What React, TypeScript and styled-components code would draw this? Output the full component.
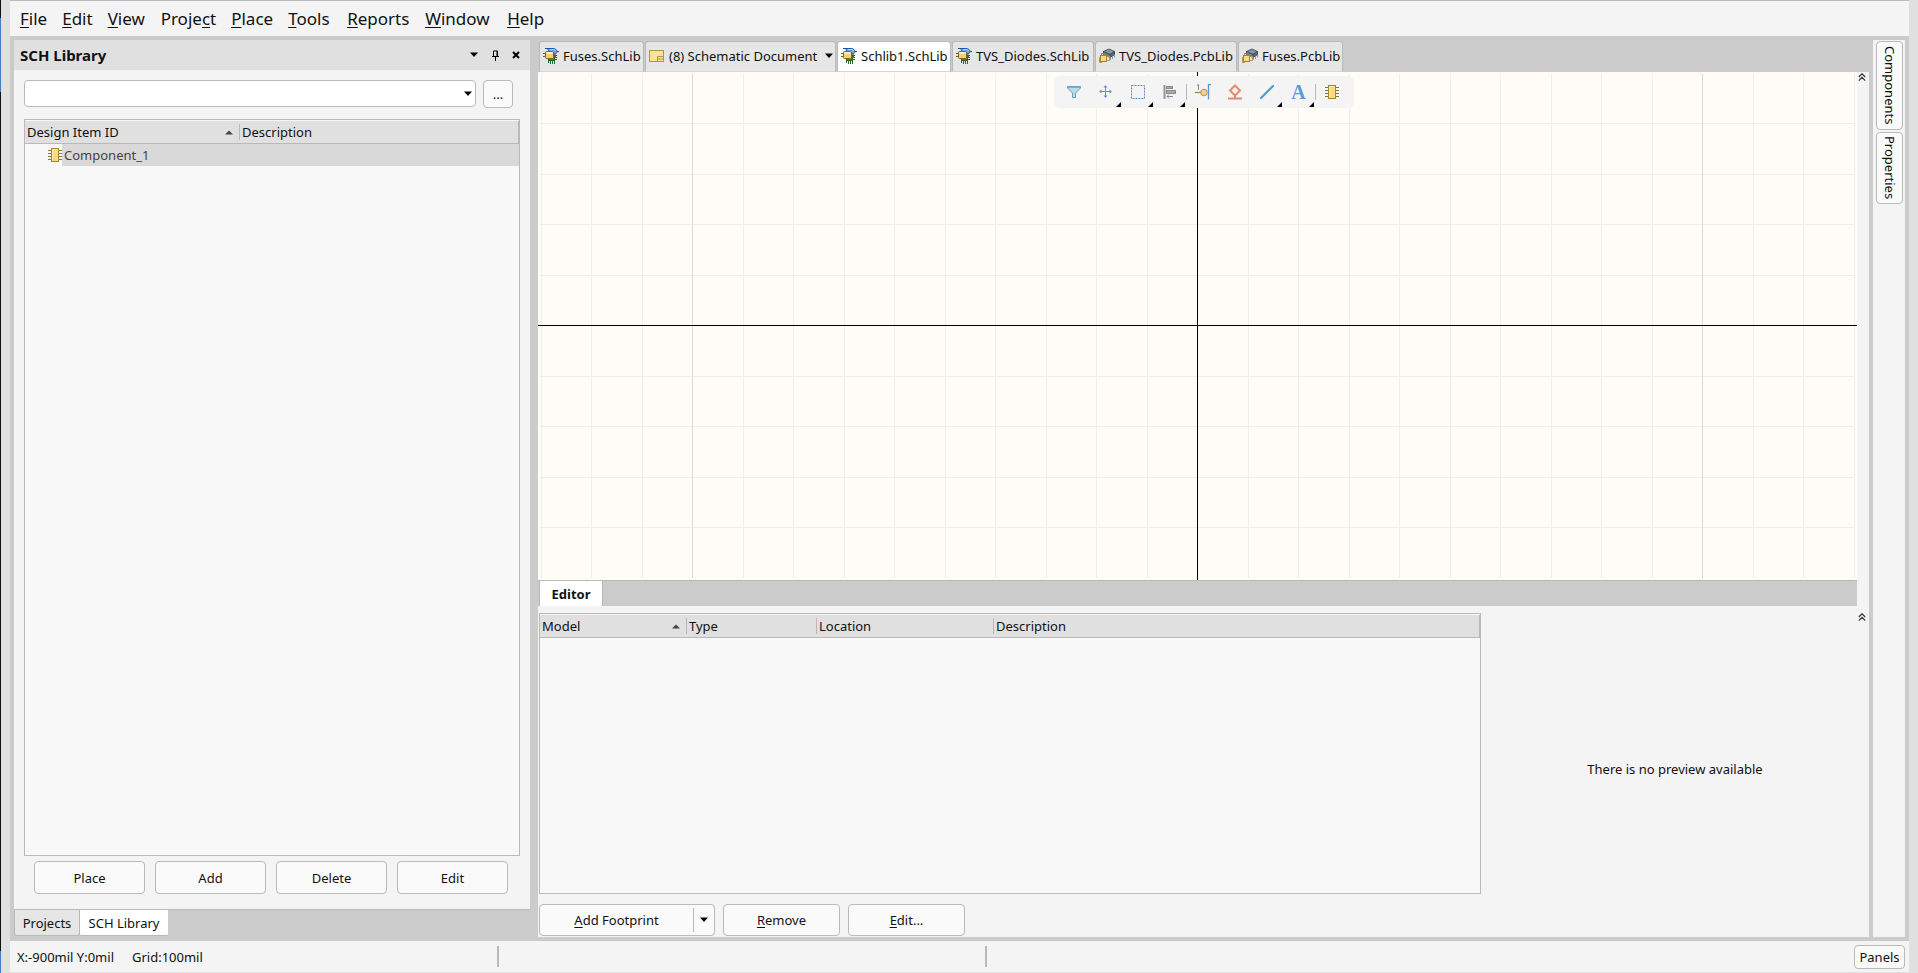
import React from "react";
import styled, { createGlobalStyle, css } from "styled-components";

const color = {
  frame: "#e0e0e0",
  gutter: "#cbcbcb",
  panel: "#f4f4f4",
  list: "#f8f8f8",
  line: "#b9b9b9",
  head: "#e0e0e0",
  button: "#fafafa",
  canvas: "#fffcf7",
};

const GlobalStyle = createGlobalStyle`
  * { box-sizing: border-box; }
  body {
    margin: 0;
    background: ${color.frame};
    color: #111;
    font-family: "Noto Sans", "Open Sans", sans-serif;
    font-size: 13px;
    line-height: 16px;
  }
  button, input { font: inherit; color: inherit; }
  button { cursor: default; padding: 0; }
`;

const Desktop = styled.div`
  display: flex;
  min-height: 100vh;
`;

const DesktopEdge = styled.div`
  width: 1px;
  background: linear-gradient(#111 18px, #3f7fbf 18px, #3f7fbf 92px, #111 92px, #111 calc(100% - 22px), #3f7fbf calc(100% - 22px));
`;

const Window = styled.div`
  flex: 1;
  min-width: 0;
  display: flex;
  flex-direction: column;
  margin: 0 9px;
  padding-bottom: 1px;
  border-top: 1px solid ${color.line};
`;

const MenuBar = styled.nav`
  height: 35px;
  display: flex;
  align-items: center;
  padding: 0 10px;
  gap: 15px;
  background: ${color.panel};
`;

const MenuItem = styled.button<{ $width: number }>`
  min-width: ${(p) => p.$width}px;
  border: 0;
  background: none;
  text-align: left;
  white-space: nowrap;
  font-size: 17px;
  line-height: 24px;
`;

const Key = styled.span`
  text-decoration: underline;
  text-underline-offset: 2px;
`;

const Workspace = styled.div`
  flex: 1;
  display: flex;
  min-height: 0;
  padding: 4px;
  background: ${color.gutter};
`;

const LibraryPanel = styled.aside`
  width: 516px;
  flex: none;
  display: flex;
  flex-direction: column;
  margin-right: 8px;
`;

const PanelTitle = styled.header`
  height: 30px;
  display: flex;
  align-items: center;
  padding: 0 7px 0 6px;
  gap: 7px;
  background: ${color.head};
`;

const PanelHeading = styled.h1`
  flex: 1;
  margin: 0;
  font-size: 15px;
  line-height: 20px;
  font-weight: 700;
`;

const IconButton = styled.button`
  display: flex;
  align-items: center;
  justify-content: center;
  width: 14px;
  height: 16px;
  border: 0;
  background: none;
`;

const PanelBody = styled.div`
  flex: 1;
  display: flex;
  flex-direction: column;
  padding: 10px 10px 15px;
  background: ${color.panel};
  border-bottom: 1px solid ${color.line};
`;

const FilterRow = styled.div`
  display: flex;
  align-items: flex-start;
  gap: 7px;
  padding-right: 7px;
  margin-bottom: 11px;
`;

const Combo = styled.div`
  flex: 1;
  height: 27px;
  display: flex;
  align-items: center;
  border: 1px solid ${color.line};
  border-radius: 4px;
  background: #fff;
`;

const ComboInput = styled.input`
  flex: 1;
  min-width: 0;
  height: 100%;
  padding: 0 6px;
  border: 0;
  background: none;
  outline: none;
`;

const outlined = css`
  border: 1px solid ${color.line};
  border-radius: 4px;
  background: ${color.button};
`;

const PushButton = styled.button<{ $width?: number; $height?: number }>`
  ${outlined}
  ${(p) => (p.$width ? `width: ${p.$width}px;` : "flex: 1;")}
  height: ${(p) => p.$height ?? 33}px;
`;

const ListBox = styled.div`
  flex: 1;
  padding-top: 1px;
  border: 1px solid ${color.line};
  background: ${color.list};
`;

const Table = styled.table`
  width: 100%;
  table-layout: fixed;
  border-collapse: separate;
  border-spacing: 0;
`;

const HeadCell = styled.th`
  height: 23px;
  padding: 0;
  font-weight: 400;
  text-align: left;
  background: ${color.head};
  border-bottom: 1px solid ${color.line};
  &:last-child { border-right: 1px solid ${color.line}; }
`;

const HeadLabel = styled.div<{ $first?: boolean }>`
  display: flex;
  align-items: center;
  justify-content: space-between;
  height: 16px;
  padding: 0 6px 0 2px;
  border-left: ${(p) => (p.$first ? "0" : `1px solid ${color.line}`)};
`;

const ItemCell = styled.td`
  height: 22px;
  padding: 0;
  color: #444;
  &:last-child { background: #d9d9d9; }
`;

const ItemLabel = styled.div`
  display: flex;
  align-items: center;
  height: 22px;
  padding-left: 23px;
`;

const ItemName = styled.span`
  flex: 1;
  height: 22px;
  padding-left: 2px;
  line-height: 22px;
  background: #d9d9d9;
`;

const LibraryActions = styled.div`
  display: flex;
  gap: 10px;
  padding: 5px 12px 0 10px;
`;

const PanelTabs = styled.div`
  display: flex;
  height: 27px;
`;

const PanelTab = styled.button<{ $active?: boolean; $width: number }>`
  width: ${(p) => p.$width}px;
  height: 26px;
  border: 1px solid ${(p) => (p.$active ? "#fff" : color.line)};
  border-top: 0;
  border-bottom-color: ${color.line};
  border-radius: 0 0 3px 3px;
  background: ${(p) => (p.$active ? "#fff" : "#e6e6e6")};
`;

const DocumentArea = styled.main`
  flex: 1;
  min-width: 0;
  display: flex;
  flex-direction: column;
`;

const DocumentTabs = styled.div`
  height: 32px;
  display: flex;
  padding: 1px 1px 0;
  gap: 1px;
`;

const DocumentTab = styled.button<{ $active?: boolean; $width: number }>`
  width: ${(p) => p.$width}px;
  height: 31px;
  display: flex;
  align-items: center;
  gap: 4px;
  padding: 0 1px 2px 3px;
  white-space: nowrap;
  border: 1px solid ${color.line};
  border-bottom-color: #d6d6d6;
  border-radius: 3px 3px 0 0;
  background: ${(p) => (p.$active ? "#fff" : "#e6e6e6")};
`;

const TabCaption = styled.span`
  flex: 1;
  text-align: left;
`;

const Pane = styled.section<{ $grow: number }>`
  flex: ${(p) => p.$grow} 1 0;
  min-height: 0;
  display: flex;
  background: ${color.panel};
`;

const CollapseStrip = styled.div<{ $top: number }>`
  width: 12px;
  padding: ${(p) => p.$top}px 0 0 1px;
  background: ${color.panel};
`;

const CollapseButton = styled.button`
  display: block;
  width: 8px;
  height: 8px;
  border: 0;
  background: none;
  line-height: 0;
`;

const CanvasFrame = styled.div`
  position: relative;
  flex: 1;
  min-width: 0;
  background: ${color.canvas};
`;

const CanvasDrawing = styled.svg`
  position: absolute;
  inset: 0;
  width: 100%;
  height: 100%;
  display: block;
`;

const ActiveBar = styled.div`
  position: absolute;
  top: 4px;
  left: 50%;
  margin-left: -144px;
  width: 300px;
  height: 32px;
  display: flex;
  align-items: center;
  padding-left: 4px;
  border-radius: 6px;
  background: #f4f4f4;
`;

const Tool = styled.button<{ $divided?: boolean }>`
  position: relative;
  width: ${(p) => (p.$divided ? 33 : 32)}px;
  height: 32px;
  display: flex;
  align-items: center;
  justify-content: center;
  padding-left: ${(p) => (p.$divided ? 2 : 0)}px;
  border: 0;
  background: none;
  &::before {
    content: "";
    display: ${(p) => (p.$divided ? "block" : "none")};
    position: absolute;
    left: 0;
    top: 8px;
    width: 1px;
    height: 16px;
    background: ${color.line};
  }
`;

const MoreCorner = styled.span`
  position: absolute;
  right: 1px;
  bottom: 1px;
  border-left: 5px solid transparent;
  border-bottom: 5px solid #000;
`;

const EditorBar = styled.div`
  height: 26px;
  display: flex;
  margin-right: 12px;
  padding-left: 1px;
  border-top: 1px solid ${color.line};
`;

const EditorStrip = styled.div`
  background: linear-gradient(to left, ${color.panel} 12px, ${color.gutter} 12px);
`;

const EditorTab = styled.button`
  width: 64px;
  border: 1px solid ${color.line};
  border-width: 0 1px;
  background: #fff;
  font-weight: 700;
`;

const ModelPane = styled.div`
  flex: 942 1 0;
  display: flex;
  flex-direction: column;
  padding: 7px 0 1px 1px;
`;

const ModelActions = styled.div`
  display: flex;
  gap: 8px;
  padding-top: 10px;
`;

const SplitButton = styled.div`
  ${outlined}
  display: flex;
  align-items: center;
  width: 176px;
  height: 32px;
`;

const SplitMain = styled.button`
  flex: 1;
  height: 24px;
  border: 0;
  background: none;
`;

const SplitArrow = styled.button`
  width: 21px;
  height: 24px;
  display: flex;
  align-items: center;
  justify-content: center;
  border: 0;
  border-left: 1px solid ${color.line};
  background: none;
`;

const Preview = styled.div`
  flex: 364 1 0;
  display: flex;
  align-items: center;
  justify-content: center;
  padding: 0 0 6px 12px;
`;

const SideBar = styled.aside`
  width: 32px;
  flex: none;
  margin-left: 4px;
  padding: 1px 2px 0 3px;
  display: flex;
  flex-direction: column;
  gap: 2px;
  background: ${color.panel};
`;

const SideTab = styled.button<{ $height: number }>`
  ${outlined}
  height: ${(p) => p.$height}px;
  writing-mode: vertical-rl;
`;

const StatusBar = styled.footer`
  height: 31px;
  display: flex;
  align-items: center;
  padding: 0 4px 0 7px;
  background: ${color.panel};
`;

const StatusCell = styled.div<{ $width?: number }>`
  ${(p) => (p.$width ? `width: ${p.$width}px;` : "flex: 1;")}
  height: 21px;
  display: flex;
  align-items: center;
  gap: 18px;
  ${(p) => (p.$width ? `border-right: 2px solid ${color.line};` : "")}
`;

/* ---------- drawings ---------- */

const DownArrow = () => (
  <svg width="10" height="6" viewBox="0 0 10 6" aria-hidden>
    <path d="M1 0.5H9L5 5Z" fill="#000" />
  </svg>
);

const SortMark = () => (
  <svg width="8" height="5" viewBox="0 0 8 5" aria-hidden>
    <path d="M0 4.5H8L4 0.5Z" fill="#444" />
  </svg>
);

const PinIcon = () => (
  <svg width="9" height="11" viewBox="0 0 9 11" aria-hidden>
    <path d="M2.5 6V1H6.5V6M1 6.5H8M4.5 7V11" fill="none" stroke="#000" />
    <path d="M5.5 1H7V6.5H5.5Z" fill="#000" />
  </svg>
);

const CloseIcon = () => (
  <svg width="8" height="8" viewBox="0 0 8 8" aria-hidden>
    <path d="M1 1L7 7M7 1L1 7" stroke="#000" strokeWidth="2" />
  </svg>
);

const CollapseIcon = () => (
  <svg width="8" height="8" viewBox="0 0 8 8" aria-hidden>
    <path d="M0.8 4L4 0.8L7.2 4M0.8 7.6L4 4.4L7.2 7.6" fill="none" stroke="#333" strokeWidth="1.2" />
  </svg>
);

const ChipIcon = () => (
  <svg width="14" height="14" viewBox="0 0 14 14" aria-hidden>
    <path d="M0 2.5H14M0 5.5H14M0 8.5H14M0 11.5H14" stroke="#8d7433" />
    <rect x="3.5" y="0.5" width="7" height="13" fill="#ffd97e" stroke="#a8842c" />
    <path d="M4.5 12.5V1.5H9" fill="none" stroke="#ffeab0" />
  </svg>
);

const SchLibIcon = () => (
  <svg width="16" height="16" viewBox="0 0 16 16" aria-hidden>
    <path d="M2 0.5H7M13 3.5H16" stroke="#1b4c9b" />
    <path d="M4.5 0.5H10C12.500 0.500 14 2 14 3.500S12.500 6.500 10.500 6.500H5.500C6.500 4.500 6 2.500 4.500 0.500Z" fill="#6ba6f2" stroke="#1f57ab" />
    <path d="M7 1.500H10.500C12 1.500 12.500 2.500 12.500 3" fill="none" stroke="#b4d4fb" />
    <path d="M5.500 12V15M7.500 12V16M9.500 12V16M11.500 12V16M12 7.500H14M12 9.500H14M12 11.500H14" stroke="#256b25" />
    <rect x="5.500" y="7.500" width="6" height="5" fill="#2f8b33" stroke="#226a26" />
    <path d="M0 5.500H13M0 8.500H13" stroke="#7e6118" />
    <rect x="2.500" y="3.500" width="8" height="7" rx="1" fill="#f3d079" stroke="#86661a" />
    <path d="M3.500 5H9.500" stroke="#fff0bb" strokeWidth="2" />
  </svg>
);

const SheetIcon = () => (
  <svg width="16" height="12" viewBox="0 0 16 12" aria-hidden>
    <rect x="0.500" y="0.500" width="14" height="11" fill="#f9e394" stroke="#ad9350" />
    <path d="M8.500 11V6.500H14M8.500 9H14" fill="none" stroke="#ad9350" />
  </svg>
);

const PcbLibIcon = () => (
  <svg width="16" height="16" viewBox="0 0 16 16" aria-hidden>
    <path d="M4.500 3.500L10 1L15.500 3.500L11 6.500Z" fill="#8496a9" stroke="#4b5968" />
    <path d="M11 6.500L15.500 3.500V6.500L11 9.500Z" fill="#5a6a7b" stroke="#3f4c5a" />
    <path d="M4.500 3.500L11 6.500V9.500L4.500 6.500Z" fill="#6f8193" stroke="#44515f" />
    <path d="M11.500 9.500V12M13.500 8.500V11M15.500 7V9.500" stroke="#8b97a3" />
    <path d="M2.500 8V5.500H5.500V8" fill="none" stroke="#a38433" />
    <rect x="1.500" y="7.500" width="6" height="6" fill="#f8db83" stroke="#a38433" />
    <path d="M8 8.500H10.500V12.500H8M0.500 9V14.500H3" fill="none" stroke="#b89a4c" />
  </svg>
);

const FilterIcon = () => (
  <svg width="14" height="14" viewBox="0 0 14 14" aria-hidden>
    <path d="M0.500 1.500H13.500V3L8.500 8V12.500H5.500V8L0.500 3Z" fill="#b7dbe8" stroke="#6aa3bb" />
    <path d="M1 2.500H13" stroke="#7fb2c8" />
  </svg>
);

const MoveIcon = () => (
  <svg width="14" height="14" viewBox="0 0 14 14" aria-hidden>
    <path d="M6.500 1V12M1 6.500H12" stroke="#6f8fd0" />
    <path d="M6.500 0L8.500 2.500H4.500ZM6.500 13L4.500 10.500H8.500ZM0 6.500L2.500 4.500V8.500ZM13 6.500L10.500 8.500V4.500Z" fill="#6f8fd0" />
  </svg>
);

const SelectIcon = () => (
  <svg width="14" height="14" viewBox="0 0 14 14" aria-hidden>
    <rect x="0.500" y="0.500" width="13" height="13" fill="none" stroke="#5f86cc" strokeDasharray="2 1" />
  </svg>
);

const AlignIcon = () => (
  <svg width="14" height="14" viewBox="0 0 14 14" aria-hidden>
    <path d="M1.500 0V14" stroke="#959595" strokeWidth="2" />
    <rect x="3.500" y="1.500" width="6" height="2" fill="#aaa" stroke="#8a8a8a" />
    <rect x="3.500" y="5.500" width="9" height="3" fill="#aaa" stroke="#8a8a8a" />
    <path d="M4 11.500H10M6 9.500L4 11.500L6 13.500" fill="none" stroke="#8a8a8a" />
  </svg>
);

const PinToolIcon = () => (
  <svg width="16" height="16" viewBox="0 0 16 16" aria-hidden>
    <path d="M0 8.500H6" stroke="#a98448" strokeWidth="1.300" />
    <path d="M2 1.500L3.500 0.500V6" fill="none" stroke="#8a8a8a" />
    <circle cx="9" cy="8.500" r="3.300" fill="#f2cf92" stroke="#b38d4c" />
    <path d="M16 0.500H13.500V15.500" fill="none" stroke="#5b9ad8" strokeWidth="1.300" />
  </svg>
);

const DirectiveIcon = () => (
  <svg width="14" height="16" viewBox="0 0 14 16" aria-hidden>
    <path d="M7 1.500L12 6.500L7 11.500L2 6.500Z" fill="none" stroke="#e58a6c" strokeWidth="2" />
    <path d="M0 14.500H14M7 11V14" stroke="#e58a6c" strokeWidth="2" />
  </svg>
);

const LineIcon = () => (
  <svg width="14" height="14" viewBox="0 0 14 14" aria-hidden>
    <path d="M1 13L13 1" stroke="#5797d8" strokeWidth="2.200" strokeLinecap="round" />
  </svg>
);

const LetterA = styled.span`
  font-family: "Liberation Serif", serif;
  font-size: 20px;
  line-height: 20px;
  font-weight: 700;
  color: #5a9adb;
`;

/* Grid pitch is 50.5 px per 100 mil; every tenth line is emphasised. */
const steps = Array.from({ length: 81 }, (_, i) => i - 40)
  .filter((n) => n !== 0)
  .sort((a, b) => Number(a % 10 === 0) - Number(b % 10 === 0));

const SchematicGrid = () => (
  <CanvasDrawing aria-hidden>
    <svg x="50%" y="50%" overflow="visible">
      {steps.map((n) => {
        const at = Math.round(n * 50.5);
        return (
          <g key={n} stroke={n % 10 === 0 ? "#d9d9d6" : "#eeeeeb"}>
            <path d={`M${at} -2000V2000`} />
            <path d={`M-3000 ${at - 0.5}H3000`} />
          </g>
        );
      })}
    </svg>
    <rect width="100%" height="100%" fill="none" stroke={color.canvas} strokeWidth="4" />
    <svg x="50%" y="50%" overflow="visible">
      <path d="M0 -2000V2000M-3000 -0.500H3000" stroke="#000" />
    </svg>
  </CanvasDrawing>
);

const menus: { before?: string; hot: string; after: string; width: number }[] = [
  { hot: "F", after: "ile", width: 27 },
  { hot: "E", after: "dit", width: 30 },
  { hot: "V", after: "iew", width: 38 },
  { before: "Proje", hot: "c", after: "t", width: 54 },
  { hot: "P", after: "lace", width: 40 },
  { hot: "T", after: "ools", width: 44 },
  { hot: "R", after: "eports", width: 63 },
  { hot: "W", after: "indow", width: 67 },
  { hot: "H", after: "elp", width: 36 },
];

const documents = [
  { name: "Fuses.SchLib", icon: <SchLibIcon />, width: 105 },
  { name: "(8) Schematic Document", icon: <SheetIcon />, width: 191, menu: true },
  { name: "Schlib1.SchLib", icon: <SchLibIcon />, width: 114, active: true },
  { name: "TVS_Diodes.SchLib", icon: <SchLibIcon />, width: 142 },
  { name: "TVS_Diodes.PcbLib", icon: <PcbLibIcon />, width: 142 },
  { name: "Fuses.PcbLib", icon: <PcbLibIcon />, width: 105 },
];

const tools = [
  { name: "Filter", icon: <FilterIcon /> },
  { name: "Move", icon: <MoveIcon />, more: true },
  { name: "Select", icon: <SelectIcon />, more: true },
  { name: "Align", icon: <AlignIcon />, more: true },
  { name: "Place pin", icon: <PinToolIcon />, divided: true },
  { name: "Place directive", icon: <DirectiveIcon /> },
  { name: "Place line", icon: <LineIcon />, more: true },
  { name: "Place text", icon: <LetterA>A</LetterA>, more: true },
  { name: "Place part", icon: <ChipIcon />, divided: true },
];

export default function App() {
  return (
    <>
      <GlobalStyle />
      <Desktop>
        <DesktopEdge />
        <Window>
          <MenuBar>
            {menus.map((m) => (
              <MenuItem key={m.hot + m.after} $width={m.width}>
                {m.before}
                <Key>{m.hot}</Key>
                {m.after}
              </MenuItem>
            ))}
          </MenuBar>

          <Workspace>
            <LibraryPanel>
              <PanelTitle>
                <PanelHeading>SCH Library</PanelHeading>
                <IconButton aria-label="Panel menu"><DownArrow /></IconButton>
                <IconButton aria-label="Pin panel"><PinIcon /></IconButton>
                <IconButton aria-label="Close panel"><CloseIcon /></IconButton>
              </PanelTitle>
              <PanelBody>
                <FilterRow>
                  <Combo>
                    <ComboInput type="text" aria-label="Filter components" />
                    <IconButton aria-label="Show filters"><DownArrow /></IconButton>
                  </Combo>
                  <PushButton $width={30} $height={28}>...</PushButton>
                </FilterRow>
                <ListBox>
                  <Table>
                    <colgroup>
                      <col width="214" />
                      <col />
                    </colgroup>
                    <thead>
                      <tr>
                        <HeadCell><HeadLabel $first>Design Item ID<SortMark /></HeadLabel></HeadCell>
                        <HeadCell><HeadLabel>Description</HeadLabel></HeadCell>
                      </tr>
                    </thead>
                    <tbody>
                      <tr>
                        <ItemCell>
                          <ItemLabel>
                            <ChipIcon />
                            <ItemName>Component_1</ItemName>
                          </ItemLabel>
                        </ItemCell>
                        <ItemCell />
                      </tr>
                    </tbody>
                  </Table>
                </ListBox>
                <LibraryActions>
                  <PushButton>Place</PushButton>
                  <PushButton>Add</PushButton>
                  <PushButton>Delete</PushButton>
                  <PushButton>Edit</PushButton>
                </LibraryActions>
              </PanelBody>
              <PanelTabs>
                <PanelTab $width={66}>Projects</PanelTab>
                <PanelTab $width={88} $active>SCH Library</PanelTab>
              </PanelTabs>
            </LibraryPanel>

            <DocumentArea>
              <DocumentTabs>
                {documents.map((d) => (
                  <DocumentTab key={d.name} $width={d.width} $active={d.active}>
                    {d.icon}
                    <TabCaption>{d.name}</TabCaption>
                    {d.menu && <DownArrow />}
                  </DocumentTab>
                ))}
              </DocumentTabs>
              <Pane $grow={508}>
                <CanvasFrame>
                  <SchematicGrid />
                  <ActiveBar>
                    {tools.map((t) => (
                      <Tool key={t.name} aria-label={t.name} $divided={t.divided}>
                        {t.icon}
                        {t.more && <MoreCorner />}
                      </Tool>
                    ))}
                  </ActiveBar>
                </CanvasFrame>
                <CollapseStrip $top={1}>
                  <CollapseButton aria-label="Collapse canvas"><CollapseIcon /></CollapseButton>
                </CollapseStrip>
              </Pane>
              <EditorStrip>
                <EditorBar>
                  <EditorTab>Editor</EditorTab>
                </EditorBar>
              </EditorStrip>
              <Pane $grow={331}>
                <ModelPane>
                  <ListBox>
                    <Table>
                      <colgroup>
                        <col width="146" />
                        <col width="130" />
                        <col width="177" />
                        <col />
                      </colgroup>
                      <thead>
                        <tr>
                          <HeadCell><HeadLabel $first>Model<SortMark /></HeadLabel></HeadCell>
                          <HeadCell><HeadLabel>Type</HeadLabel></HeadCell>
                          <HeadCell><HeadLabel>Location</HeadLabel></HeadCell>
                          <HeadCell><HeadLabel>Description</HeadLabel></HeadCell>
                        </tr>
                      </thead>
                    </Table>
                  </ListBox>
                  <ModelActions>
                    <SplitButton>
                      <SplitMain><Key>A</Key>dd Footprint</SplitMain>
                      <SplitArrow aria-label="More footprint options"><DownArrow /></SplitArrow>
                    </SplitButton>
                    <PushButton $width={117} $height={32}><Key>R</Key>emove</PushButton>
                    <PushButton $width={117} $height={32}><Key>E</Key>dit...</PushButton>
                  </ModelActions>
                </ModelPane>
                <Preview>There is no preview available</Preview>
                <CollapseStrip $top={7}>
                  <CollapseButton aria-label="Collapse editor"><CollapseIcon /></CollapseButton>
                </CollapseStrip>
              </Pane>
            </DocumentArea>

            <SideBar>
              <SideTab $height={89}>Components</SideTab>
              <SideTab $height={72}>Properties</SideTab>
            </SideBar>
          </Workspace>

          <StatusBar>
            <StatusCell $width={482}>
              <span>X:-900mil Y:0mil</span>
              <span>Grid:100mil</span>
            </StatusCell>
            <StatusCell $width={488} />
            <StatusCell />
            <PushButton $width={51} $height={24}>Panels</PushButton>
          </StatusBar>
        </Window>
      </Desktop>
    </>
  );
}
